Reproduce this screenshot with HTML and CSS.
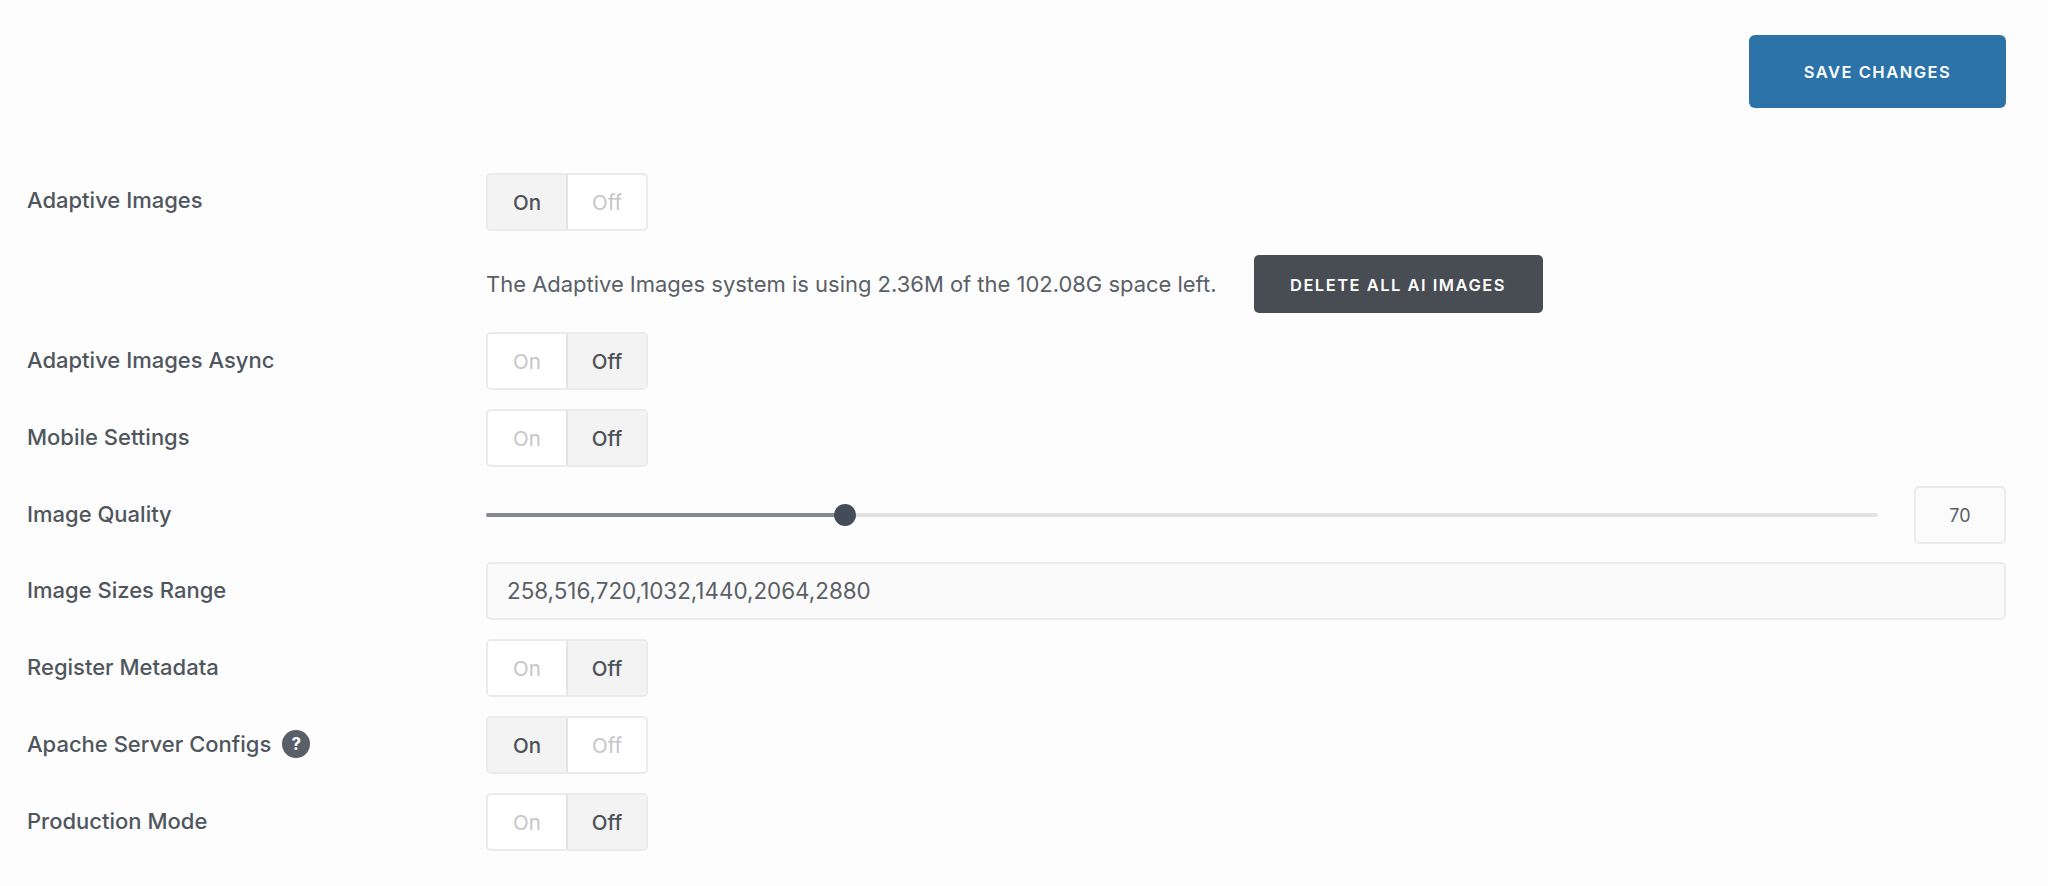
FILE: index.html
```html
<!DOCTYPE html>
<html lang="en">
<head>
<meta charset="utf-8">
<title>Adaptive Images</title>
<link rel="stylesheet" href="styles.css">
</head>
<body>
<main class="panel">
  <div class="actions"><button class="btn btn-save">SAVE CHANGES</button></div>
  <div class="row row-first">
    <div class="label label-raised">Adaptive Images</div>
    <div class="toggle"><span class="opt active">On</span><span class="opt">Off</span></div>
  </div>
  <div class="row row-info">
    <div class="label"></div>
    <p class="info">The Adaptive Images system is using 2.36M of the 102.08G space left.</p>
    <button class="btn btn-dark">DELETE ALL AI IMAGES</button>
  </div>
  <div class="row">
    <div class="label">Adaptive Images Async</div>
    <div class="toggle"><span class="opt">On</span><span class="opt active">Off</span></div>
  </div>
  <div class="row">
    <div class="label">Mobile Settings</div>
    <div class="toggle"><span class="opt">On</span><span class="opt active">Off</span></div>
  </div>
  <div class="row">
    <div class="label">Image Quality</div>
    <div class="slider">
      <div class="track"><div class="fill" style="width:359px"></div><span class="thumb" style="left:359px"></span></div>
      <div class="num">70</div>
    </div>
  </div>
  <div class="row row-field">
    <div class="label">Image Sizes Range</div>
    <div class="field">258,516,720,1032,1440,2064,2880</div>
  </div>
  <div class="row">
    <div class="label">Register Metadata</div>
    <div class="toggle"><span class="opt">On</span><span class="opt active">Off</span></div>
  </div>
  <div class="row">
    <div class="label">Apache Server Configs <span class="help">?</span></div>
    <div class="toggle"><span class="opt active">On</span><span class="opt">Off</span></div>
  </div>
  <div class="row">
    <div class="label">Production Mode</div>
    <div class="toggle"><span class="opt">On</span><span class="opt active">Off</span></div>
  </div>
</main>
</body>
</html>
```
FILE: styles.css
```css
* { box-sizing: border-box; }
html, body { margin: 0; height: 100%; }
body {
  background: #fdfdfd;
  font-family: Inter, "Liberation Sans", sans-serif;
  color: #50565e;
  overflow: hidden;
}
.panel { padding: 35px 42px 0 27px; }
.actions { display: flex; justify-content: flex-end; }
.btn {
  border: 0;
  color: #fff;
  font-family: inherit;
  font-weight: 600;
  font-size: 16.5px;
  letter-spacing: 1.5px;
  padding-top: 2px;
}
.btn-save { width: 257px; height: 73px; background: #2b73a9; border-radius: 6px; }
.btn-dark { width: 289px; height: 58px; background: #484c53; border-radius: 5px; margin-left: 37px; }
.row {
  display: flex;
  align-items: center;
  min-height: 58px;
  margin-top: 19px;
}
.row-first { margin-top: 65px; }
.row-info { margin-top: 24px; }
.row-field { margin-top: 18px; }
.label {
  flex: 0 0 459px;
  font-size: 22px;
  font-weight: 500;
  color: #50565e;
  display: flex;
  align-items: center;
  padding-bottom: 2px;
}
.label-raised { padding-bottom: 4px; }
.help {
  width: 28px;
  height: 28px;
  margin-left: 11px;
  border-radius: 50%;
  background: #585f68;
  color: #fff;
  font-size: 17px;
  font-weight: 700;
  display: flex;
  align-items: center;
  justify-content: center;
}
.toggle {
  display: flex;
  width: 162px;
  height: 58px;
  border: 2px solid #ebebeb;
  border-radius: 5px;
  background: #fff;
  overflow: hidden;
}
.opt {
  flex: 1;
  display: flex;
  align-items: center;
  justify-content: center;
  font-size: 20.5px;
  color: #c4c6c8;
}
.opt + .opt { border-left: 2px solid #e4e4e4; }
.opt.active { background: #f3f3f3; color: #4d5259; font-weight: 500; }
.info { margin: 0; font-size: 21.96px; color: #5a6067; }
.slider { flex: 1; display: flex; align-items: center; }
.track {
  position: relative;
  flex: 1;
  height: 4px;
  border-radius: 2px;
  background: #e2e2e2;
}
.fill { height: 4px; border-radius: 2px; background: #85888c; }
.thumb {
  position: absolute;
  top: -9px;
  width: 22px;
  height: 22px;
  margin-left: -11px;
  border-radius: 50%;
  background: #454c59;
}
.num {
  width: 92px;
  height: 58px;
  margin-left: 36px;
  border: 2px solid #ebebeb;
  border-radius: 5px;
  background: #fbfbfb;
  display: flex;
  align-items: center;
  justify-content: center;
  font-size: 18px;
  color: #5a5f66;
}
.field {
  flex: 1;
  height: 58px;
  padding-left: 19px;
  border: 2px solid #ebebeb;
  border-radius: 5px;
  background: #fafafa;
  display: flex;
  align-items: center;
  font-size: 22.4px;
  color: #5a5f66;
  padding-bottom: 2px;
}
```
